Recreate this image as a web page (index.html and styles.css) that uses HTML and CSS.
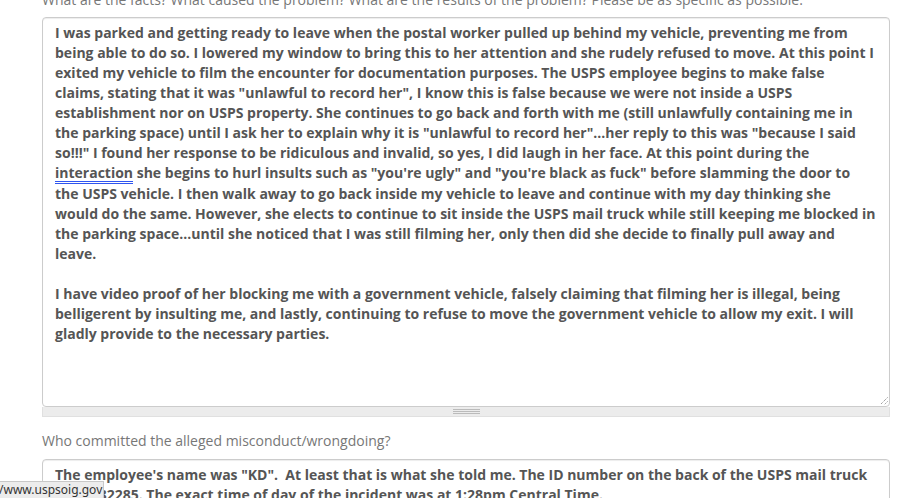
FILE: index.html
```html
<!DOCTYPE html>
<html>
<head>
<meta charset="utf-8">
<link rel="stylesheet" href="styles.css">
</head>
<body>
<div class="page">
  <div class="field">
    <label class="label">What are the facts? What caused the problem? What are the results of the problem? Please be as specific as possible.</label>
    <div class="resizable">
      <div class="textarea tall">
        <span class="ln">I was parked and getting ready to leave when the postal worker pulled up behind my vehicle, preventing me from</span>
        <span class="ln">being able to do so. I lowered my window to bring this to her attention and she rudely refused to move. At this point I</span>
        <span class="ln">exited my vehicle to film the encounter for documentation purposes. The USPS employee begins to make false</span>
        <span class="ln">claims, stating that it was "unlawful to record her", I know this is false because we were not inside a USPS</span>
        <span class="ln">establishment nor on USPS property. She continues to go back and forth with me (still unlawfully containing me in</span>
        <span class="ln">the parking space) until I ask her to explain why it is "unlawful to record her"...her reply to this was "because I said</span>
        <span class="ln">so!!!" I found her response to be ridiculous and invalid, so yes, I did laugh in her face. At this point during the</span>
        <span class="ln"><span class="flag">interaction</span> she begins to hurl insults such as "you're ugly" and "you're black as fuck" before slamming the door to</span>
        <span class="ln">the USPS vehicle. I then walk away to go back inside my vehicle to leave and continue with my day thinking she</span>
        <span class="ln">would do the same. However, she elects to continue to sit inside the USPS mail truck while still keeping me blocked in</span>
        <span class="ln">the parking space...until she noticed that I was still filming her, only then did she decide to finally pull away and</span>
        <span class="ln">leave.</span>
        <span class="ln">&nbsp;</span>
        <span class="ln">I have video proof of her blocking me with a government vehicle, falsely claiming that filming her is illegal, being</span>
        <span class="ln">belligerent by insulting me, and lastly, continuing to refuse to move the government vehicle to allow my exit. I will</span>
        <span class="ln">gladly provide to the necessary parties.</span>
        <svg class="resizer" width="9" height="9" viewBox="0 0 9 9"><path d="M8.5 1.5 L1.5 8.5 M8.5 5.5 L5.5 8.5" stroke="#777" stroke-width="1" stroke-dasharray="1 1" fill="none"/></svg>
      </div>
      <div class="grip"><span class="grip-lines"></span></div>
    </div>
  </div>
  <div class="field second">
    <label class="label">Who committed the alleged misconduct/wrongdoing?</label>
    <div class="textarea">
      <span class="ln">The employee's name was "KD".&nbsp; At least that is what she told me. The ID number on the back of the USPS mail truck</span>
      <span class="ln">was # 32285. The exact time of day of the incident was at 1:28pm Central Time.</span>
    </div>
  </div>
</div>
<div class="status">/www.uspsoig.gov</div>
</body>
</html>
```

FILE: styles.css
```css
html, body {
  margin: 0;
  padding: 0;
  background: #fff;
  overflow: hidden;
}
.page {
  padding-left: 42px;
  width: 848px;
  margin-top: -10px;
  font-family: "Open Sans", "Liberation Sans", sans-serif;
}
.field {
  display: flex;
  flex-direction: column;
}
.label {
  display: block;
  font-size: 14px;
  line-height: 20px;
  color: #777;
  margin-bottom: 7px;
  white-space: nowrap;
}
.second {
  margin-top: 14px;
}
.second .label {
  margin-bottom: 8px;
}
.textarea {
  position: relative;
  box-sizing: border-box;
  border: 1px solid #ccc;
  border-radius: 4px;
  padding: 5px 12px;
  font-size: 14px;
  font-weight: 700;
  line-height: 20px;
  color: #555;
  background: #fff;
  box-shadow: inset 0 1px 1px rgba(0,0,0,0.075);
}
.tall {
  height: 390px;
}
.ln {
  display: block;
  white-space: nowrap;
}
.flag {
  border-bottom: 3px double #2f55f0;
  line-height: 16px;
  display: inline-block;
}
.resizer {
  position: absolute;
  right: 1px;
  bottom: 1px;
}
.grip {
  height: 10px;
  box-sizing: border-box;
  background: #ececec;
  border: 1px solid #e0e0e0;
  border-top: none;
  display: flex;
  justify-content: center;
  align-items: center;
}
.grip-lines {
  width: 27px;
  height: 5px;
  border-top: 1px solid #bbb;
  border-bottom: 1px solid #bbb;
  box-sizing: border-box;
  position: relative;
}
.grip-lines::after {
  content: "";
  position: absolute;
  left: 0;
  right: 0;
  top: 1px;
  border-top: 1px solid #bbb;
}
.status {
  position: fixed;
  left: -3px;
  bottom: 0;
  height: 17px;
  padding: 0 1px 0 2px;
  box-sizing: border-box;
  background: #ececec;
  border: 1px solid #c8c8c8;
  border-left: none;
  border-bottom: none;
  font-family: "Noto Sans", "DejaVu Sans", sans-serif;
  font-size: 12px;
  line-height: 16px;
  color: #333;
  white-space: nowrap;
}
```
